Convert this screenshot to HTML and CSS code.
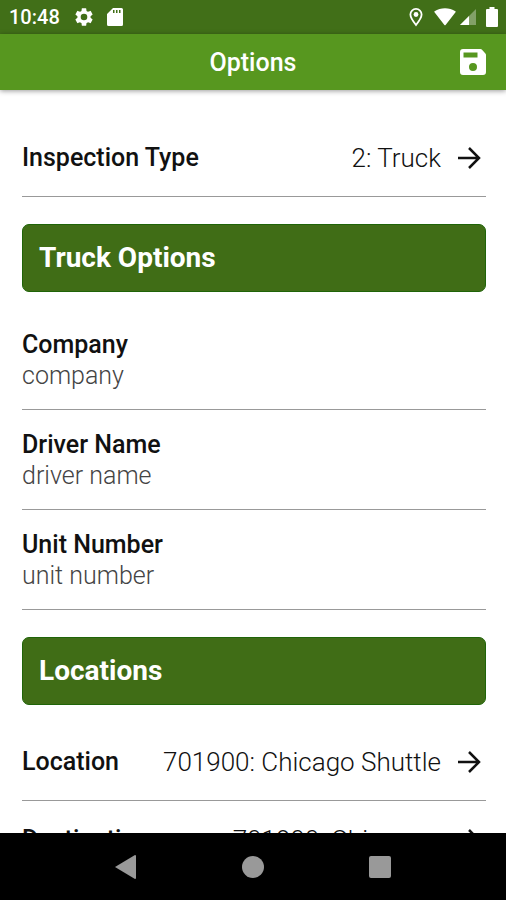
FILE: index.html
```html
<!DOCTYPE html>
<html lang="en">
<head>
  <meta charset="UTF-8">
  <meta name="viewport" content="width=device-width, initial-scale=1">
  <title>Options</title>
  <link rel="stylesheet" href="styles.css">
</head>
<body>

<div class="status-bar">
  <span class="clock">10:48</span>
  <svg class="icon-gear" width="22" height="22" viewBox="0 0 24 24" fill="currentColor"><path d="M19.14 12.94c.04-.3.06-.61.06-.94 0-.32-.02-.64-.07-.94l2.03-1.58a.49.49 0 0 0 .12-.61l-1.92-3.32a.49.49 0 0 0-.59-.22l-2.39.96c-.5-.38-1.03-.7-1.62-.94l-.36-2.54a.48.48 0 0 0-.48-.41h-3.84c-.24 0-.43.17-.47.41l-.36 2.54c-.59.24-1.13.57-1.62.94l-2.39-.96a.48.48 0 0 0-.59.22L2.74 8.87c-.12.21-.08.47.12.61l2.03 1.58c-.05.3-.09.63-.09.94s.02.64.07.94l-2.03 1.58a.49.49 0 0 0-.12.61l1.92 3.32c.12.22.37.29.59.22l2.39-.96c.5.38 1.03.7 1.62.94l.36 2.54c.05.24.24.41.48.41h3.84c.24 0 .44-.17.47-.41l.36-2.54c.59-.24 1.13-.56 1.62-.94l2.39.96c.22.08.47 0 .59-.22l1.92-3.32a.49.49 0 0 0-.12-.61l-2.01-1.58zM12 15.6A3.6 3.6 0 1 1 12 8.4a3.6 3.6 0 0 1 0 7.2z"/></svg>
  <svg width="16" height="20" viewBox="0 0 16 20" fill="currentColor"><path fill-rule="evenodd" d="M6 1h8.500Q16 1 16 2.500v15Q16 19 14.500 19h-13Q0 19 0 17.500V7zM6 3v3h1.500V3zm3 0v3h1.500V3zm3 0v3h1.500V3z"/></svg>
  <span class="spacer"></span>
  <svg width="14" height="20" viewBox="0 0 14 20" fill="none" stroke="currentColor"><path stroke-width="1.800" d="M7 18C4 14.200 1.400 10.700 1.400 7.500a5.600 5.600 0 0 1 11.200 0C12.600 10.700 10 14.200 7 18z"/><circle cx="7" cy="7.500" r="2.400" fill="currentColor" stroke="none"/></svg>
  <svg class="icon-wifi" width="22" height="18" viewBox="0 0 22 18" fill="currentColor"><path d="M.5 4.200Q0 3.700.6 3.300C6.500-.8 15.500-.8 21.400 3.300q.6.4.1.9L11.600 17q-.6.700-1.200 0z"/></svg>
  <svg class="icon-signal" width="16" height="18" viewBox="0 0 16 18" fill="currentColor"><path opacity=".35" d="M16 1v16H0z"/><path d="M9 8v9H0z"/></svg>
  <svg width="12" height="20" viewBox="0 0 12 20" fill="currentColor"><path d="M3.500 0h5v2H11q1 0 1 1v16q0 1-1 1H1q-1 0-1-1V3q0-1 1-1h2.500z"/></svg>
</div>

<header class="app-bar">
  <h1>Options</h1>
  <button class="save-btn" type="button" aria-label="Save">
    <svg width="26" height="26" viewBox="0 0 26 26" fill="currentColor"><path fill-rule="evenodd" d="M3 0h17.500q.8 0 1.300.6l3.600 3.800q.6.600.6 1.400V23q0 3-3 3H3q-3 0-3-3V3Q0 0 3 0zM3.500 3.500v5h14v-5zM13 14a4 4 0 1 0 0 8 4 4 0 0 0 0-8z"/></svg>
  </button>
</header>

<main class="content">
  <a class="row" href="#inspection-type">
    <span class="row-label">Inspection Type</span>
    <span class="row-value">2: Truck</span>
    <svg class="arrow" width="24" height="24" viewBox="0 0 24 24"><path d="M1 12h21M12 2l10 10-10 10"/></svg>
  </a>

  <h2 class="section-title">Truck Options</h2>

  <div class="field">
    <label for="company">Company</label>
    <input type="text" id="company" placeholder="company">
  </div>
  <div class="field">
    <label for="driver">Driver Name</label>
    <input type="text" id="driver" placeholder="driver name">
  </div>
  <div class="field">
    <label for="unit">Unit Number</label>
    <input type="text" id="unit" placeholder="unit number">
  </div>

  <h2 class="section-title">Locations</h2>

  <a class="row" href="#location">
    <span class="row-label">Location</span>
    <span class="row-value">701900: Chicago Shuttle</span>
    <svg class="arrow" width="24" height="24" viewBox="0 0 24 24"><path d="M1 12h21M12 2l10 10-10 10"/></svg>
  </a>
  <a class="row" href="#destination">
    <span class="row-label">Destination</span>
    <span class="row-value">701900: Chicago…</span>
    <svg class="arrow" width="24" height="24" viewBox="0 0 24 24"><path d="M1 12h21M12 2l10 10-10 10"/></svg>
  </a>
</main>

<nav class="nav-bar">
  <button type="button" aria-label="Back"><svg width="22" height="24" viewBox="0 0 22 24" fill="currentColor"><path d="M20 0q1 0 1 1v22q0 1-1 1L0 12z"/></svg></button>
  <button type="button" aria-label="Home"><svg width="22" height="22" viewBox="0 0 22 22" fill="currentColor"><circle cx="11" cy="11" r="11"/></svg></button>
  <button type="button" aria-label="Recent apps"><svg width="22" height="22" viewBox="0 0 22 22" fill="currentColor"><rect width="22" height="22" rx="2"/></svg></button>
</nav>

</body>
</html>
```

FILE: styles.css
```css
* {
  box-sizing: border-box;
}
body {
  margin: 0;
  height: 100vh;
  display: flex;
  flex-direction: column;
  overflow: hidden;
  background-color: #ffffff;
  color: #111111;
  font-family: Roboto, "Liberation Sans", sans-serif;
  font-size: 25px;
}
svg {
  display: block;
  flex: none;
}
button {
  padding: 0;
  border: none;
  background: none;
  color: inherit;
  cursor: pointer;
}

/* Status bar */
.status-bar {
  flex: none;
  display: flex;
  align-items: center;
  height: 34px;
  padding: 0 8px 0 9px;
  background-color: #416f18;
  color: #ffffff;
}
.clock {
  font-size: 20px;
  font-weight: 500;
}
.icon-gear {
  margin: 0 12px 0 13px;
}
.spacer {
  flex: 1;
}
.icon-wifi {
  margin: 0 4px 0 11px;
}
.icon-signal {
  margin-right: 10px;
}

/* App bar */
.app-bar {
  flex: none;
  display: grid;
  grid-template-columns: 1fr auto 1fr;
  align-items: center;
  height: 56px;
  padding: 0 20px;
  background-color: #57971f;
  color: #ffffff;
  box-shadow: 0 1px 5px rgba(0, 0, 0, 0.4);
  z-index: 1;
}
.app-bar h1 {
  grid-column: 2;
  margin: 0;
  font-size: 25px;
  font-weight: 500;
}
.save-btn {
  justify-self: end;
}

/* Form */
.content {
  flex: 1;
  min-height: 0;
  overflow: hidden;
  padding: 29px 20px 0 22px;
}
.row {
  display: flex;
  align-items: center;
  height: 78px;
  border-bottom: 1px solid #999999;
  color: inherit;
  text-decoration: none;
}
.row-label {
  font-weight: 500;
}
.row-value {
  flex: 1;
  text-align: right;
  font-size: 26px;
  font-weight: 300;
}
.arrow {
  margin: 0 5px 0 16px;
  fill: none;
  stroke: #111111;
  stroke-width: 2.5;
}
.section-title {
  margin: 27px 0 18px;
  padding: 0 16px;
  border: 1px solid #1f6408;
  border-radius: 7px;
  background-color: #406d16;
  color: #ffffff;
  font-size: 28px;
  font-weight: 700;
  line-height: 66px;
}
.field {
  padding: 20px 0 19px;
  border-bottom: 1px solid #999999;
}
.field label {
  display: block;
  font-weight: 500;
  line-height: 30px;
}
.field input {
  display: block;
  width: 100%;
  height: 30px;
  padding: 0;
  border: none;
  outline: none;
  background: none;
  font: inherit;
  font-weight: 300;
}
.field input::placeholder {
  color: #444444;
}

/* Android navigation */
.nav-bar {
  flex: none;
  display: flex;
  justify-content: center;
  align-items: center;
  gap: 105px;
  height: 67px;
  background-color: #000000;
  color: #999999;
}
```
